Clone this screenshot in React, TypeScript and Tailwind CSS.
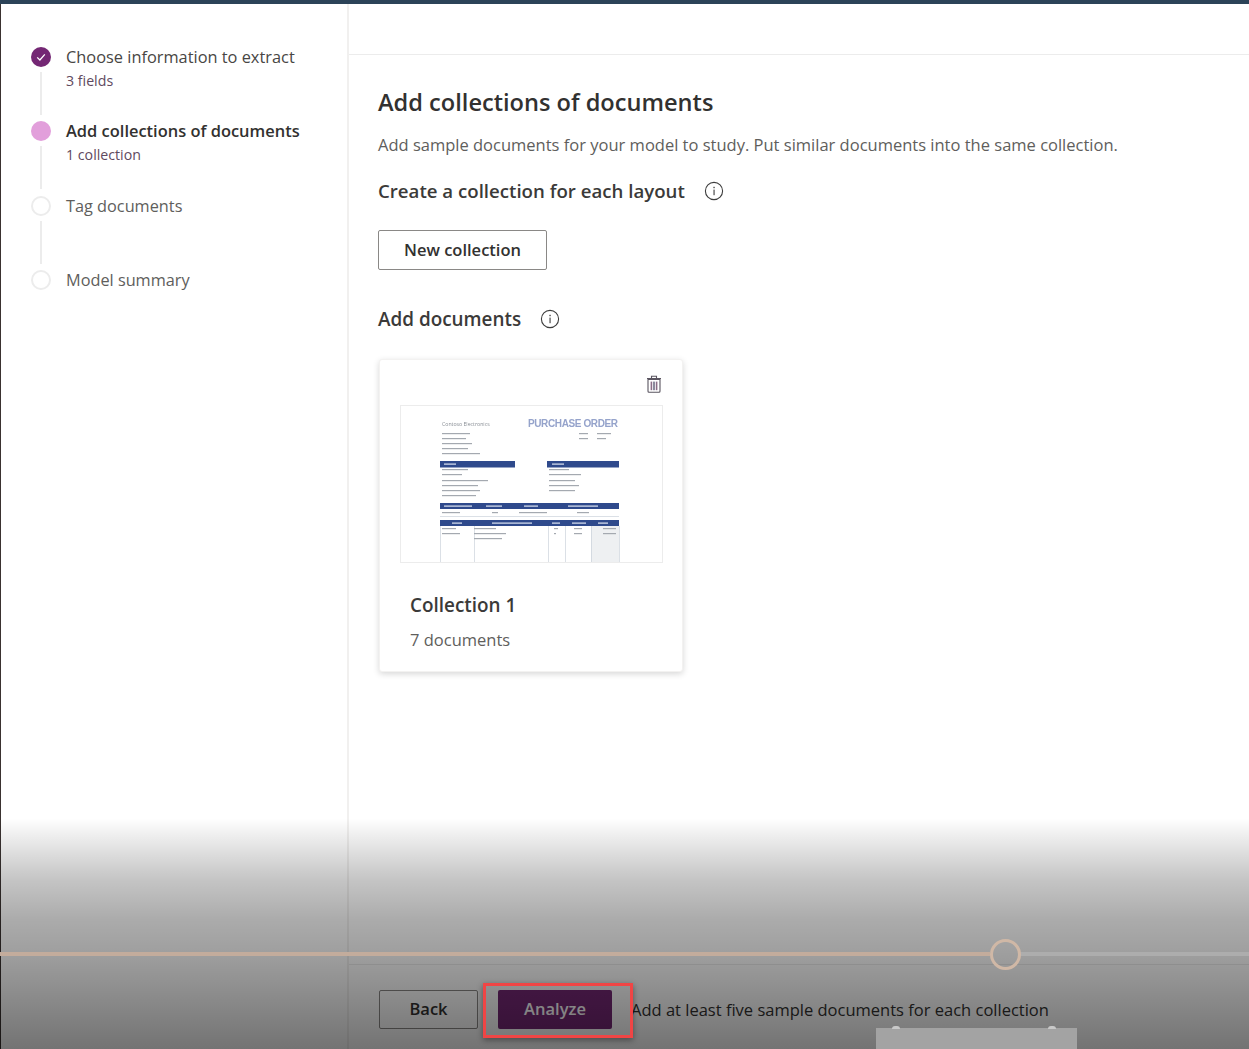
import React from "react";

function Info() {
  return (
    <svg width="20" height="20" viewBox="0 0 20 20" fill="none" className="shrink-0 text-[#3d3d3d]">
      <circle cx="10" cy="10" r="8.6" stroke="currentColor" strokeWidth="1.1" />
      <rect x="9.5" y="8.6" width="1.1" height="5.6" fill="currentColor" />
      <rect x="9.4" y="5.8" width="1.3" height="1.4" fill="currentColor" />
    </svg>
  );
}

function Step({ state, title, sub, last, strong }: { state: "done" | "active" | "todo"; title: string; sub?: string; last?: boolean; strong?: boolean }) {
  return (
    <div className="flex gap-[15px] h-[74.3px]">
      <div className="flex flex-col items-center w-[20px] shrink-0">
        {state === "done" && (
          <div className="w-[20px] h-[20px] rounded-full bg-[#742774] flex items-center justify-center">
            <svg width="12" height="12" viewBox="0 0 12 12" fill="none">
              <path d="M2.2 6.4 L4.9 9 L9.8 3.4" stroke="#ffffff" strokeWidth="1.3" />
            </svg>
          </div>
        )}
        {state === "active" && <div className="w-[20px] h-[20px] rounded-full bg-[#e29fdb]" />}
        {state === "todo" && <div className="w-[20px] h-[20px] rounded-full border-2 border-[#ececec] bg-white" />}
        {!last && <div className="w-[2px] h-[43px] mt-[5px] bg-[#ececec]" />}
      </div>
      <div className="flex flex-col">
        <div className={`leading-[20px] ${strong ? "text-[16.45px] font-semibold text-[#323130]" : state === "todo" ? "text-[16.3px] text-[#605e5c]" : "text-[16.38px] text-[#484644]"}`}>{title}</div>
        {sub && <div className="text-[14.2px] leading-[20px] mt-[4px] text-[#5f4a60]">{sub}</div>}
      </div>
    </div>
  );
}

function Thumb() {
  const navy = "#2f4a8c";
  const grey = "#a4a9b0";
  const lines = (x: number, ys: number[], ws: number[]) =>
    ys.map((y, i) => <rect key={`${x}-${y}`} x={x} y={y} width={ws[i % ws.length]} height="1.2" fill={grey} />);
  const ticks = (y: number, xs: number[][]) =>
    xs.map(([x, w]) => <rect key={`${y}-${x}`} x={x} y={y} width={w} height="1.2" fill="#dfe5f2" />);
  return (
    <svg width="261" height="156" viewBox="1 1 261 156" className="block">
      <rect x="0" y="0" width="263" height="158" fill="#ffffff" />
      <text x="42" y="21" fontSize="5.2" fill="#8a8f96" fontFamily="Open Sans, sans-serif">Contoso Electronics</text>
      <text x="128" y="22" fontSize="10" fontWeight="700" fill="#95a3cb" fontFamily="Liberation Sans, sans-serif" textLength="90" lengthAdjust="spacing">PURCHASE ORDER</text>
      {lines(42, [28, 33, 38, 43, 48], [28, 24, 30, 26, 38])}
      {lines(179, [28, 33], [9])}
      {lines(197, [28, 33], [14, 9])}
      <rect x="40" y="56" width="75" height="6.5" fill={navy} />
      <rect x="147" y="56" width="72" height="6.5" fill={navy} />
      {ticks(58.5, [[44, 12], [152, 12]])}
      {lines(42, [64, 69, 75, 80, 85, 90], [26, 20, 46, 36, 38, 34])}
      {lines(149, [64, 69, 75, 80, 85], [20, 32, 26, 30, 26])}
      <rect x="40" y="98" width="179" height="6" fill={navy} />
      {ticks(100.5, [[44, 28], [86, 16], [124, 14], [168, 30]])}
      {lines(42, [107], [18])}
      {lines(92, [107], [6])}
      {lines(119, [107], [28])}
      {lines(177, [107], [12])}
      <rect x="40" y="111" width="179" height="0.6" fill="#c4cbd6" />
      <rect x="40" y="115" width="179" height="6" fill={navy} />
      {ticks(117.5, [[52, 10], [92, 40], [152, 8], [172, 14], [198, 10]])}
      <rect x="191" y="121" width="28" height="37" fill="#eef0f2" />
      {[40, 74, 148, 165, 191, 219].map((x) => (
        <rect key={x} x={x} y="121" width="0.6" height="37" fill="#c4cbd6" />
      ))}
      {lines(42, [123, 128], [14, 18])}
      {lines(74, [123, 128, 133], [22, 32, 28])}
      {lines(154, [123, 128], [4, 2])}
      {lines(174, [123, 128], [8])}
      {lines(203, [123, 128], [13])}
    </svg>
  );
}

export default function App() {
  return (
    <div className="relative h-[1049px] w-[1249px] overflow-hidden bg-white font-['Open_Sans','Liberation_Sans',sans-serif] text-[#323130]">
      <div className="h-[4px] bg-[#2c4358]" />
      <div className="flex h-[1045px] border-l-[1px] border-[#3a3230]">
        <aside className="w-[348px] shrink-0 border-r-2 border-[#f1f0ef] pl-[30px] pt-[43px]">
          <Step state="done" title="Choose information to extract" sub="3 fields" />
          <Step state="active" title="Add collections of documents" sub="1 collection" strong />
          <Step state="todo" title="Tag documents" />
          <Step state="todo" title="Model summary" last />
        </aside>
        <main className="flex-1 flex flex-col min-w-0">
          <div className="h-[51px] shrink-0 border-b border-[#ececec]" />
          <div className="flex-1 pl-[29px] pt-[31px]">
            <h1 className="text-[23.6px] leading-[32px] font-semibold text-[#323130]">Add collections of documents</h1>
            <p className="mt-[16px] text-[16.5px] leading-[22px] text-[#605e5c]">Add sample documents for your model to study. Put similar documents into the same collection.</p>
            <div className="mt-[21px] flex items-center gap-[19px] h-[28px]">
              <h2 className="text-[18.65px] leading-[28px] font-semibold text-[#3b3a39]">Create a collection for each layout</h2>
              <Info />
            </div>
            <button className="mt-[25px] block w-[169px] h-[40px] border border-[#8a8886] rounded-[2px] bg-white text-[16.5px] font-semibold text-[#323130]">New collection</button>
            <div className="mt-[35px] flex items-center gap-[19px] h-[28px]">
              <h2 className="text-[18.9px] leading-[28px] font-semibold text-[#3b3a39]">Add documents</h2>
              <Info />
            </div>
            <div className="mt-[26px] ml-[1px] w-[304px] h-[313px] rounded-[3px] border border-[#f3f2f1] bg-white shadow-[0_2px_6px_rgba(0,0,0,0.16)] pl-[20px] pr-[19px]">
              <div className="h-[45px] flex justify-end items-start pt-[15px] pr-[1px]">
                <svg width="16" height="18" viewBox="0 0 16 18" fill="none">
                  <path d="M2 4.5h12V16.3a1 1 0 0 1-1 1H3a1 1 0 0 1-1-1z" stroke="#5a5560" strokeWidth="1.1" />
                  <path d="M1 3.5h14M5.5 3V1.2h5V3" stroke="#5a5560" strokeWidth="1.1" />
                  <rect x="4.6" y="6.6" width="1.6" height="8.6" fill="#8c6f88" />
                  <rect x="7.2" y="6.6" width="1.6" height="8.6" fill="#6f6f85" />
                  <rect x="9.8" y="6.6" width="1.6" height="8.6" fill="#8c6f88" />
                </svg>
              </div>
              <div className="w-[263px] h-[158px] border border-[#ececec] blur-[0.5px]">
                <Thumb />
              </div>
              <div className="mt-[28px] pl-[10px] text-[18.9px] leading-[28px] font-semibold text-[#3b3a39]">Collection 1</div>
              <div className="mt-[9px] pl-[10px] text-[16.5px] leading-[24px] text-[#605e5c]">7 documents</div>
            </div>
          </div>
          <div className="h-[85px] shrink-0 border-t border-[#ececec] pl-[30px] pt-[25px] flex items-start">
            <button className="w-[99px] h-[39px] border border-[#8a8886] rounded-[2px] text-[16.5px] font-semibold text-[#323130]">Back</button>
            <button className="ml-[20px] w-[114px] h-[39px] rounded-[2px] bg-[#742774] text-[16.5px] font-semibold text-white">Analyze</button>
            <span className="ml-[19px] text-[16.5px] leading-[39px] text-[#323130]">Add at least five sample documents for each collection</span>
          </div>
        </main>
      </div>

      {/* darkening fade laid over the bottom of the page */}
      <div className="absolute left-0 right-0 top-[818px] bottom-0 bg-[linear-gradient(to_bottom,rgba(0,0,0,0)_0%,rgba(0,0,0,0.12)_14%,rgba(0,0,0,0.23)_27%,rgba(0,0,0,0.33)_44%,rgba(0,0,0,0.38)_59%,rgba(0,0,0,0.55)_100%)] pointer-events-none" />

      {/* red highlight around the Analyze button */}
      <div className="absolute left-[483px] top-[983px] w-[150px] h-[55px] border-[3px] border-[#f04545] shadow-[0_2px_6px_rgba(0,0,0,0.4)]" />

      {/* video player scrubber */}
      <div className="absolute left-0 top-[952px] w-[990px] h-[4px] bg-[#c3ac9c]" />
      <div className="absolute left-[1020px] right-0 top-[952px] h-[4px] bg-[#adadad]" />
      <div className="absolute left-[990px] top-[939px] w-[31px] h-[31px] rounded-full border-[3px] border-[#d0b8a6]" />

      {/* overlapping grey tab at the bottom edge */}
      <div className="absolute left-[876px] top-[1028px] w-[201px] h-[21px] bg-[#a3a3a3]" />
      <div className="absolute left-[892px] top-[1026px] w-[8px] h-[3px] rounded-t-full bg-[#c8c8c8]" />
      <div className="absolute left-[1048px] top-[1026px] w-[8px] h-[3px] rounded-t-full bg-[#c8c8c8]" />
    </div>
  );
}
